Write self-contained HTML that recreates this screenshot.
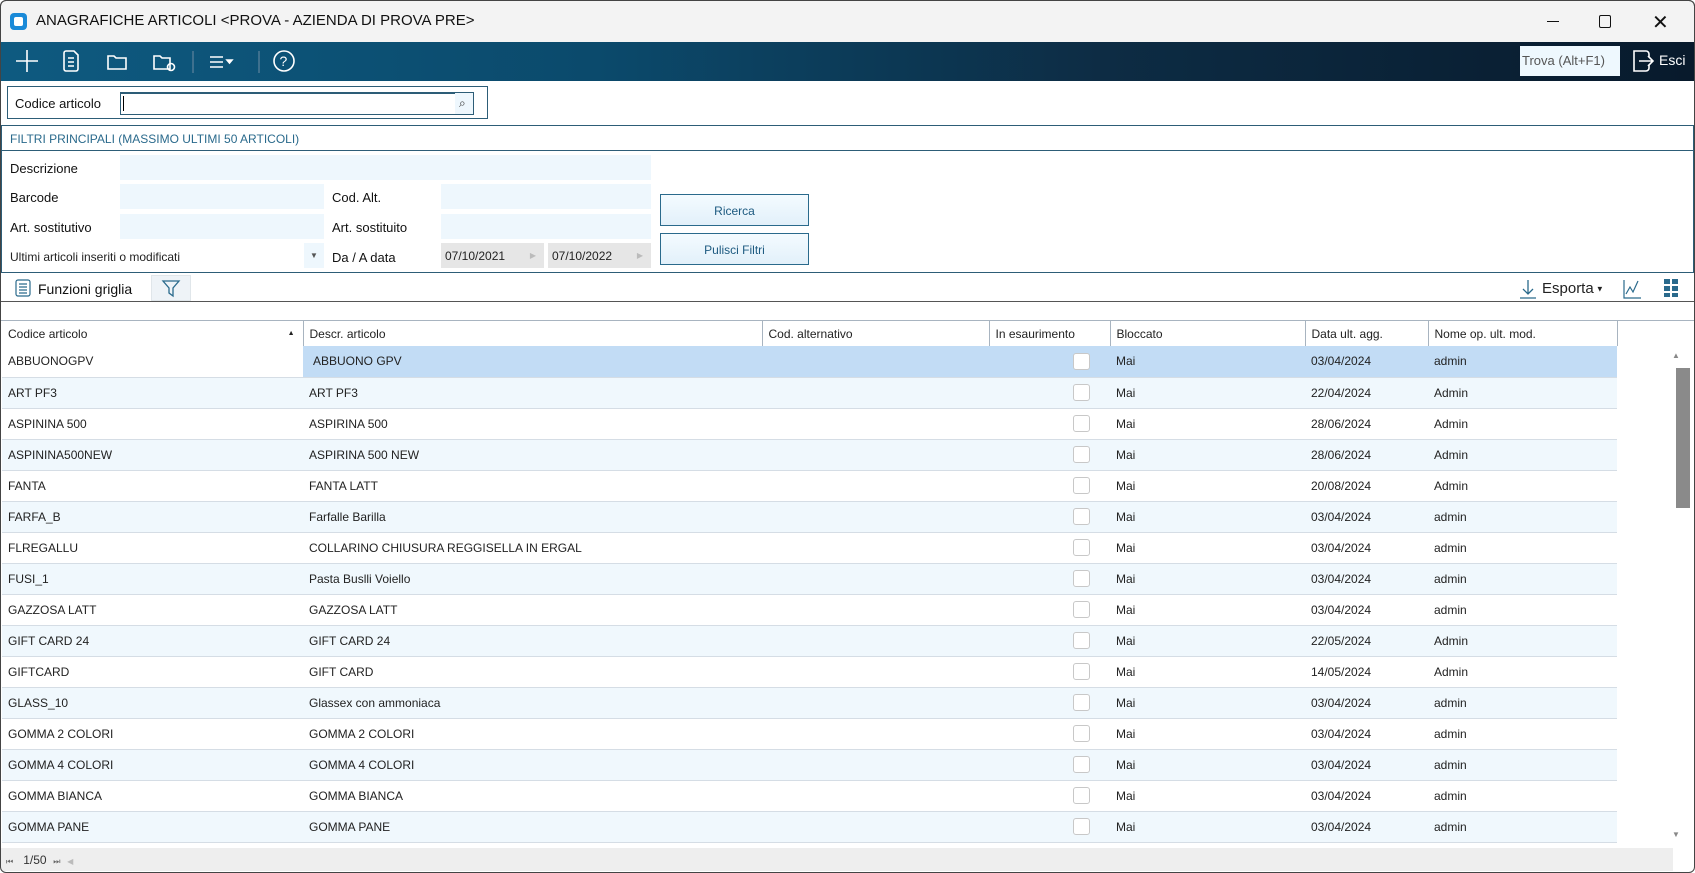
<!DOCTYPE html>
<html><head><meta charset="utf-8"><style>
*{box-sizing:border-box;margin:0;padding:0}
body{width:1695px;height:873px;overflow:hidden;background:#fff;font-family:"Liberation Sans",sans-serif;font-size:12px;color:#222;position:relative}
.abs{position:absolute}
.title{left:0;top:0;width:1695px;height:42px;background:#f3f3f3;border:1px solid #555;border-bottom:none;border-radius:6px 6px 0 0}
.tb{left:1px;top:42px;width:1693px;height:39px;background:linear-gradient(90deg,#0e5a80 0%,#0b4a6c 35%,#0d2c44 65%,#081a2c 100%)}
.lbl{font-size:13px;color:#111}
.fld{background:#eef7fd}
.btn{background:linear-gradient(#f4fbff,#e2f0fa);border:1px solid #2a6a8c;color:#1d5a80;text-align:center;font-size:12px}
.hline{height:1px;background:#2d5d77}
table{border-collapse:collapse;table-layout:fixed}
td{height:31px;border-bottom:1px solid #d5dde5;padding-left:6px;font-size:12px;white-space:nowrap;overflow:hidden}
tr:nth-child(odd) td{background:#f0f8fd}
th{height:25px;font-weight:normal;text-align:left;padding-left:6px;border-right:1px solid #a8b4c0;font-size:12px;background:#fff}
.cb{display:inline-block;width:17px;height:17px;border:1px solid #c8c8c8;border-radius:3px;background:#fff;margin-left:78px;vertical-align:middle}
</style></head><body>
<div class="abs title"></div>
<div class="abs" style="left:10px;top:13px;width:17px;height:17px;background:#1a8ad8;border-radius:4px"><div style="margin:4px;width:9px;height:9px;background:#fff;border-radius:2px"></div></div>
<div class="abs" style="left:36px;top:12px;font-size:15px;color:#111">ANAGRAFICHE ARTICOLI &lt;PROVA - AZIENDA DI PROVA PRE&gt;</div>
<div class="abs" style="left:1547px;top:21px;width:12px;height:1px;background:#111"></div>
<div class="abs" style="left:1599px;top:15px;width:12px;height:13px;border:1.3px solid #111;border-radius:2px"></div>
<div class="abs" style="left:1652px;top:10px;font-size:20px;color:#111">✕</div>
<div class="abs tb"></div>
<svg class="abs" style="left:0;top:42px" width="320" height="39" fill="none" stroke="#fff" stroke-width="1.6">
<path d="M27 8v22M16 19h22"/>
<path d="M66 9h8l4 4v14a2 2 0 0 1-2 2h-10a2 2 0 0 1-2-2v-16a2 2 0 0 1 2-2zM68 16h6M68 20h6M68 24h6"/>
<path d="M108 14h6l2 2h10v11h-18z"/>
<path d="M154 14h6l2 2h8v11h-16z"/><circle cx="171" cy="25" r="3.5"/>
<path d="M193 9v22M259 9v22" stroke="#4a7894"/>
<path d="M210 15h13M210 20h13M210 25h13"/><path d="M227 18h5l-2.5 3z" fill="#fff"/>
<circle cx="284" cy="19" r="10"/><text x="279.5" y="24" fill="#fff" stroke="none" font-size="14" font-family="Liberation Sans">?</text>
</svg>
<div class="abs" style="left:1520px;top:46px;width:100px;height:30px;background:#eef8fe;font-size:13px;color:#555;padding:7px 2px">Trova (Alt+F1)</div>
<svg class="abs" style="left:1630px;top:48px" width="28" height="26" fill="none" stroke="#fff" stroke-width="1.6"><path d="M8 3h-4v20h4M4 3h12a3 3 0 0 1 3 3v3M19 17v3a3 3 0 0 1-3 3H4M9 13h14M18 8l5 5-5 5"/></svg>
<div class="abs" style="left:1659px;top:52px;color:#fff;font-size:14px">Esci</div>

<div class="abs" style="left:7px;top:86px;width:481px;height:33px;border:1px solid #2d5d77"></div>
<div class="abs lbl" style="left:15px;top:96px">Codice articolo</div>
<div class="abs" style="left:120px;top:92px;width:354px;height:23px;border:1px solid #2d5d77;border-top-width:2px;background:#fff"></div>
<div class="abs" style="left:123px;top:96px;width:1px;height:15px;background:#000"></div>
<div class="abs" style="left:455px;top:93px;width:18px;height:21px;background:#eef7fd;font-size:12px;color:#333;padding:3px 4px">⌕</div>

<div class="abs" style="left:1px;top:125px;width:1693px;height:147px;border:1px solid #2d5d77;border-bottom:none;border-right-width:1px"></div>
<div class="abs" style="left:10px;top:132px;color:#2a6a8c;font-size:12px">FILTRI PRINCIPALI (MASSIMO ULTIMI 50 ARTICOLI)</div>
<div class="abs hline" style="left:1px;top:150px;width:1693px"></div>
<div class="abs lbl" style="left:10px;top:161px">Descrizione</div>
<div class="abs fld" style="left:120px;top:155px;width:531px;height:25px"></div>
<div class="abs lbl" style="left:10px;top:190px">Barcode</div>
<div class="abs fld" style="left:120px;top:184px;width:204px;height:25px"></div>
<div class="abs lbl" style="left:332px;top:190px">Cod. Alt.</div>
<div class="abs fld" style="left:441px;top:184px;width:210px;height:25px"></div>
<div class="abs lbl" style="left:10px;top:220px">Art. sostitutivo</div>
<div class="abs fld" style="left:120px;top:214px;width:204px;height:25px"></div>
<div class="abs lbl" style="left:332px;top:220px">Art. sostituito</div>
<div class="abs fld" style="left:441px;top:214px;width:210px;height:25px"></div>
<div class="abs" style="left:10px;top:250px;font-size:12px">Ultimi articoli inseriti o modificati</div>
<div class="abs fld" style="left:304px;top:243px;width:20px;height:25px;font-size:8px;color:#555;padding:8px 6px">▼</div>
<div class="abs lbl" style="left:332px;top:250px">Da / A data</div>
<div class="abs" style="left:441px;top:243px;width:103px;height:25px;background:#e6e6e6;padding:6px 4px;font-size:12px">07/10/2021<span style="position:absolute;right:8px;color:#bbb;font-size:8px;top:8px">▶</span></div>
<div class="abs" style="left:548px;top:243px;width:103px;height:25px;background:#e6e6e6;padding:6px 4px;font-size:12px">07/10/2022<span style="position:absolute;right:8px;color:#bbb;font-size:8px;top:8px">▶</span></div>
<div class="abs btn" style="left:660px;top:194px;width:149px;height:32px;padding-top:9px">Ricerca</div>
<div class="abs btn" style="left:660px;top:233px;width:149px;height:32px;padding-top:9px">Pulisci Filtri</div>
<div class="abs hline" style="left:1px;top:272px;width:1693px"></div>

<svg class="abs" style="left:14px;top:278px" width="18" height="20" fill="none" stroke="#2a6a8c" stroke-width="1.2"><rect x="2" y="2" width="14" height="16" rx="2"/><path d="M5 6h8M5 9h8M5 12h8M5 15h8"/></svg>
<div class="abs lbl" style="left:38px;top:281px;font-size:14px">Funzioni griglia</div>
<div class="abs" style="left:151px;top:275px;width:40px;height:26px;background:#eef3f7;border:1px solid #e0e6ea"></div>
<svg class="abs" style="left:160px;top:277px" width="22" height="22" fill="none" stroke="#2a6a8c" stroke-width="1.3"><path d="M3 4h16l-6 7v8l-4-3v-5z"/></svg>
<svg class="abs" style="left:1518px;top:278px" width="20" height="22" fill="none" stroke="#2a6a8c" stroke-width="1.3"><path d="M10 2v14M5 11l5 5 5-5M2 20h16"/></svg>
<div class="abs" style="left:1542px;top:280px;font-size:15px;color:#222">Esporta<span style="font-size:8px;vertical-align:middle"> ▼</span></div>
<svg class="abs" style="left:1622px;top:278px" width="20" height="22" fill="none" stroke="#2a6a8c" stroke-width="1.2"><path d="M2 2v18h17M4 16l4-7 3 5 5-11"/></svg>
<svg class="abs" style="left:1663px;top:278px" width="16" height="20" fill="#2a6a8c"><rect x="1" y="1" width="6" height="5"/><rect x="9" y="1" width="6" height="5"/><rect x="1" y="8" width="6" height="5"/><rect x="9" y="8" width="6" height="5"/><rect x="1" y="15" width="6" height="4"/><rect x="9" y="15" width="6" height="4"/></svg>
<div class="abs" style="left:1px;top:301px;width:1693px;height:1px;background:#555"></div>

<div class="abs" style="left:1px;top:320px;width:1693px;height:1px;background:#a8b4c0"></div>
<table class="abs" style="left:2px;top:321px;width:1615px">
<colgroup><col style="width:301px"><col style="width:459px"><col style="width:227px"><col style="width:121px"><col style="width:195px"><col style="width:123px"><col style="width:189px"></colgroup>
<tr><th>Codice articolo<span style="float:right;margin-right:8px;font-size:7px;margin-top:3px">▲</span></th><th>Descr. articolo</th><th>Cod. alternativo</th><th>In esaurimento</th><th>Bloccato</th><th>Data ult. agg.</th><th>Nome op. ult. mod.</th></tr>
<tr><td style="background:#fff">ABBUONOGPV</td><td style="background:#c2dcf5;padding-left:10px">ABBUONO GPV</td><td style="background:#c2dcf5"></td><td style="background:#c2dcf5"><span class="cb"></span></td><td style="background:#c2dcf5">Mai</td><td style="background:#c2dcf5">03/04/2024</td><td style="background:#c2dcf5">admin</td></tr>
<tr><td>ART PF3</td><td>ART PF3</td><td></td><td><span class="cb"></span></td><td>Mai</td><td>22/04/2024</td><td>Admin</td></tr>
<tr><td>ASPININA 500</td><td>ASPIRINA 500</td><td></td><td><span class="cb"></span></td><td>Mai</td><td>28/06/2024</td><td>Admin</td></tr>
<tr><td>ASPININA500NEW</td><td>ASPIRINA 500 NEW</td><td></td><td><span class="cb"></span></td><td>Mai</td><td>28/06/2024</td><td>Admin</td></tr>
<tr><td>FANTA</td><td>FANTA LATT</td><td></td><td><span class="cb"></span></td><td>Mai</td><td>20/08/2024</td><td>Admin</td></tr>
<tr><td>FARFA_B</td><td>Farfalle Barilla</td><td></td><td><span class="cb"></span></td><td>Mai</td><td>03/04/2024</td><td>admin</td></tr>
<tr><td>FLREGALLU</td><td>COLLARINO CHIUSURA REGGISELLA IN ERGAL</td><td></td><td><span class="cb"></span></td><td>Mai</td><td>03/04/2024</td><td>admin</td></tr>
<tr><td>FUSI_1</td><td>Pasta Buslli Voiello</td><td></td><td><span class="cb"></span></td><td>Mai</td><td>03/04/2024</td><td>admin</td></tr>
<tr><td>GAZZOSA LATT</td><td>GAZZOSA LATT</td><td></td><td><span class="cb"></span></td><td>Mai</td><td>03/04/2024</td><td>admin</td></tr>
<tr><td>GIFT CARD 24</td><td>GIFT CARD 24</td><td></td><td><span class="cb"></span></td><td>Mai</td><td>22/05/2024</td><td>Admin</td></tr>
<tr><td>GIFTCARD</td><td>GIFT CARD</td><td></td><td><span class="cb"></span></td><td>Mai</td><td>14/05/2024</td><td>Admin</td></tr>
<tr><td>GLASS_10</td><td>Glassex con ammoniaca</td><td></td><td><span class="cb"></span></td><td>Mai</td><td>03/04/2024</td><td>admin</td></tr>
<tr><td>GOMMA 2 COLORI</td><td>GOMMA 2 COLORI</td><td></td><td><span class="cb"></span></td><td>Mai</td><td>03/04/2024</td><td>admin</td></tr>
<tr><td>GOMMA 4 COLORI</td><td>GOMMA 4 COLORI</td><td></td><td><span class="cb"></span></td><td>Mai</td><td>03/04/2024</td><td>admin</td></tr>
<tr><td>GOMMA BIANCA</td><td>GOMMA BIANCA</td><td></td><td><span class="cb"></span></td><td>Mai</td><td>03/04/2024</td><td>admin</td></tr>
<tr><td>GOMMA PANE</td><td>GOMMA PANE</td><td></td><td><span class="cb"></span></td><td>Mai</td><td>03/04/2024</td><td>admin</td></tr>
</table>
<div class="abs" style="left:1672px;top:351px;font-size:8px;color:#888">▲</div>
<div class="abs" style="left:1676px;top:368px;width:14px;height:140px;background:#8a8a8a"></div>
<div class="abs" style="left:1672px;top:830px;font-size:8px;color:#888">▼</div>
<div class="abs" style="left:1px;top:848px;width:1672px;height:23px;background:#eeeeee"></div>
<div class="abs" style="left:6px;top:853px;font-size:12px;color:#333"><span style="font-size:8px;color:#666">⏮</span>&nbsp;&nbsp; 1/50 &nbsp;<span style="font-size:8px;color:#666">⏭</span>&nbsp; <span style="font-size:8px;color:#bbb">◀</span></div>
<div class="abs" style="left:0;top:0;width:1695px;height:873px;border:1px solid #444;border-radius:6px;pointer-events:none"></div>
</body></html>
